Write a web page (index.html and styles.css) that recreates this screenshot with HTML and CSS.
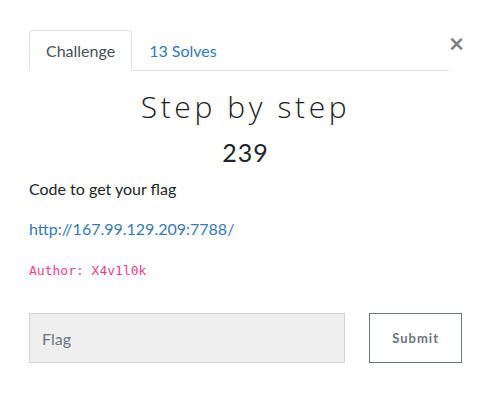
FILE: index.html
```html
<!DOCTYPE html>
<html>
<head>
<meta charset="utf-8">
<link rel="stylesheet" href="styles.css">
</head>
<body>
<div class="modal">
  <div class="head">
    <ul class="tabs">
      <li class="tab active">Challenge</li>
      <li class="tab">13 Solves</li>
    </ul>
    <button class="close" aria-label="Close">×</button>
  </div>
  <h2 class="name">Step by step</h2>
  <h3 class="value">239</h3>
  <div class="desc">
    <p>Code to get your flag</p>
    <p><a href="#">http://167.99.129.209:7788/</a></p>
    <p><code>Author: X4v1l0k</code></p>
  </div>
  <form class="submit-row">
    <input class="flag" type="text" placeholder="Flag">
    <button class="btn" type="button">Submit</button>
  </form>
</div>
</body>
</html>
```
FILE: styles.css
```css
* { box-sizing: border-box; }
html, body { margin: 0; background: #fff; }
body {
  font-family: Lato, "Open Sans", sans-serif;
  font-size: 16px;
  line-height: 1.5;
  color: #212529;
}
.modal {
  padding: 30px 30px 0 29px;
  width: 492px;
}
.head {
  display: flex;
  align-items: flex-start;
}
.tabs {
  flex: 0 0 420px;
  display: flex;
  list-style: none;
  margin: 0;
  padding: 0;
  border-bottom: 1px solid #dee2e6;
}
.tab {
  padding: 8px 16px;
  border: 1px solid transparent;
  border-top-left-radius: 4px;
  border-top-right-radius: 4px;
  margin-bottom: -1px;
  color: #337ab7;
  line-height: 23px;
}
.tab.active {
  color: #495057;
  border-color: #dee2e6 #dee2e6 #fff;
  background: #fff;
}
.close {
  margin-left: auto;
  margin-top: 1px;
  margin-right: 0;
  background: none;
  border: 0;
  padding: 0;
  font-family: Lato, sans-serif;
  font-size: 26px;
  font-weight: 700;
  line-height: 24px;
  color: #000;
  opacity: .5;
}
.name {
  margin: 18px 0 0;
  text-align: center;
  font-family: "Open Sans", Lato, sans-serif;
  font-weight: 300;
  font-size: 30px;
  letter-spacing: 3.6px;
  line-height: 36px;
  color: #1a1d20;
}
.value {
  margin: 11px 0 0;
  text-align: center;
  font-weight: 400;
  font-size: 25px;
  letter-spacing: 1px;
  line-height: 32px;
  color: #212529;
}
.desc { margin-top: 9px; }
.desc p { margin: 0 0 16px; }
.desc a { color: #337ab7; text-decoration: none; }
code {
  font-family: "DejaVu Sans Mono", monospace;
  font-size: 13px;
  color: #e83e8c;
}
.submit-row {
  display: flex;
  gap: 24px;
  margin-top: 32px;
  padding-right: 0;
}
.flag {
  width: 317px;
  height: 50px;
  background: #efefef;
  border: 1px solid #ced4da;
  border-radius: 0;
  padding: 0 12px;
  font-family: Lato, sans-serif;
  font-size: 16px;
  color: #495057;
}
.flag::placeholder { color: #6c757d; opacity: 1; }
.btn {
  width: 93px;
  height: 50px;
  background: #fff;
  border: 1px solid #6c757d;
  border-radius: 0;
  font-family: Lato, sans-serif;
  font-weight: 700;
  font-size: 13px;
  letter-spacing: 1px;
  color: #6c757d;
}
```
